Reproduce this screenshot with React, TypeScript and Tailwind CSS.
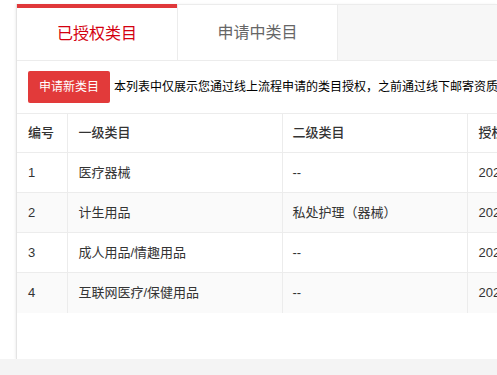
const font = { fontFamily: '"Liberation Sans", "Noto Sans CJK SC", sans-serif' };

const rows = [
  { id: "1", first: "医疗器械", second: "--", date: "2021-03-15 10:20:31" },
  { id: "2", first: "计生用品", second: "私处护理（器械）", date: "2021-03-15 10:20:31" },
  { id: "3", first: "成人用品/情趣用品", second: "--", date: "2021-03-15 10:20:31" },
  { id: "4", first: "互联网医疗/保健用品", second: "--", date: "2021-03-15 10:20:31" },
];

export default function App() {
  return (
    <div className="w-[497px] h-[375px] flex flex-col bg-white overflow-hidden" style={font}>
      <div className="h-[359px] pl-[16px] pt-[4px] flex">
        <div className="flex-1 flex flex-col border-l border-[#e4e4e4] shadow-[-1px_0_2px_rgba(0,0,0,0.06)] overflow-hidden">
          {/* tabs */}
          <div className="flex h-[57px] border-t border-b border-[#ececec] bg-[#f7f7f7]">
            <div className="w-[160px] shrink-0 bg-white border-t-4 border-[#e0383a] -mt-px flex items-center justify-center text-[16px] text-[#d4000f]">
              已授权类目
            </div>
            <div className="w-[161px] shrink-0 bg-white border-l border-r border-[#ececec] flex items-center justify-center text-[16px] text-[#666666]">
              申请中类目
            </div>
          </div>
          {/* toolbar */}
          <div className="flex items-center h-[52px] pl-[11px] whitespace-nowrap">
            <button className="h-[32px] w-[82px] shrink-0 rounded-[2px] bg-[#e23a3a] text-white text-[12px]">
              申请新类目
            </button>
            <span className="ml-[4px] text-[12px] text-black">
              本列表中仅展示您通过线上流程申请的类目授权，之前通过线下邮寄资质审核的类目授权请联系客服查询
            </span>
          </div>
          {/* table */}
          <table className="border-collapse table-fixed w-[700px] text-[13px] text-[#333333]">
            <colgroup>
              <col className="w-[50px]" />
              <col className="w-[215px]" />
              <col className="w-[185px]" />
              <col className="w-[250px]" />
            </colgroup>
            <thead>
              <tr className="h-[39px] border-t border-b border-[#ececec]">
                <th className="text-left font-medium pl-[11px] border-r border-[#ececec]">编号</th>
                <th className="text-left font-medium pl-[11px] border-r border-[#ececec]">一级类目</th>
                <th className="text-left font-medium pl-[10px] border-r border-[#ececec]">二级类目</th>
                <th className="text-left font-medium pl-[11px] whitespace-nowrap">授权时间</th>
              </tr>
            </thead>
            <tbody>
              {rows.map((r, i) => (
                <tr
                  key={r.id}
                  className={`h-[40px] ${i < rows.length - 1 ? "border-b border-[#ececec]" : ""} ${i % 2 === 1 ? "bg-[#fafafa]" : "bg-white"}`}
                >
                  <td className="pl-[11px] border-r border-[#ececec]">{r.id}</td>
                  <td className="pl-[11px] border-r border-[#ececec]">{r.first}</td>
                  <td className="pl-[10px] border-r border-[#ececec]">{r.second}</td>
                  <td className="pl-[11px] whitespace-nowrap">{r.date}</td>
                </tr>
              ))}
            </tbody>
          </table>
        </div>
      </div>
      <div className="flex-1 bg-[#f4f4f4]" />
    </div>
  );
}
